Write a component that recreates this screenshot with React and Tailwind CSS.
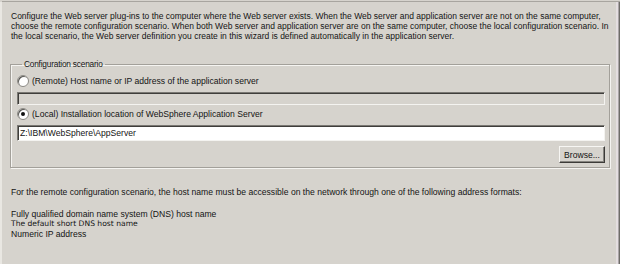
const sunken = "border border-t-[#7a7873] border-l-[#7a7873] border-b-[#f4f3f0] border-r-[#f4f3f0] shadow-[inset_1px_1px_0_#3f3e3b]";

function Radio({ checked }) {
  return (
    <span className="w-[12px] h-[12px] rounded-full bg-white border border-[#8c8a85] shadow-[inset_1px_1px_0_#5a5955] flex items-center justify-center shrink-0">
      {checked && <span className="w-[4px] h-[4px] rounded-full bg-[#111]" />}
    </span>
  );
}

export default function App() {
  return (
    <div
      className="w-[620px] h-[264px] bg-[#d6d3cd] flex overflow-hidden text-[#141414]"
      style={{ fontFamily: '"Liberation Sans", Arial, sans-serif' }}
    >
      <div className="w-[2px] h-full bg-[#e9e7e2] mt-[2px] shrink-0" />
      <div className="flex-1 min-w-0 flex flex-col border-t border-[#a8a59f] mt-px">
        <div className="pl-[9px] pt-[9px] text-[8.5px] leading-[10px] whitespace-nowrap">
          <div>Configure the Web server plug-ins to the computer where the Web server exists. When the Web server and application server are not on the same computer,</div>
          <div>choose the remote configuration scenario. When both Web server and application server are on the same computer, choose the local configuration scenario. In</div>
          <div>the local scenario, the Web server definition you create in this wizard is defined automatically in the application server.</div>
        </div>

        <fieldset className="ml-[8px] mr-[4px] mt-[18px] pb-[4px] border border-[#a3a09a] shadow-[inset_1px_1px_0_#f5f4f1,1px_1px_0_#f5f4f1] pl-[6px] pr-[4px] flex flex-col">
          <legend className="ml-[5px] px-[2px] text-[8.3px] leading-[10px] tracking-[-0.2px]">Configuration scenario</legend>
          <div className="flex items-center gap-[3px] mt-[6px] text-[8.6px] leading-[12px]">
            <Radio />
            <span>(Remote) Host name or IP address of the application server</span>
          </div>
          <div className={`h-[13px] mt-[5px] bg-[#d6d3cd] ${sunken}`} />
          <div className="flex items-center gap-[3px] mt-[3px] text-[8.6px] leading-[12px]">
            <Radio checked />
            <span>(Local) Installation location of WebSphere Application Server</span>
          </div>
          <div className={`h-[16px] mt-[5px] bg-white ${sunken} pl-[2px] text-[8.6px] leading-[14px]`}>
            Z:\IBM\WebSphere\AppServer
          </div>
          <div className="flex justify-end mt-[5px]">
            <button className="w-[46px] h-[17px] bg-[#d6d3cd] border border-t-[#f7f6f3] border-l-[#f7f6f3] border-b-[#3c3b38] border-r-[#3c3b38] shadow-[inset_-1px_-1px_0_#86847f] text-[8.6px] leading-[14px]">
              Browse...
            </button>
          </div>
        </fieldset>

        <div className="pl-[9px] mt-[19px] text-[8.6px] leading-[10px] whitespace-nowrap">
          <div>For the remote configuration scenario, the host name must be accessible on the network through one of the following address formats:</div>
          <div className="mt-[12px]">Fully qualified domain name system (DNS) host name</div>
          <div className="text-[7.6px]" style={{ fontFamily: '"DejaVu Sans", Verdana, sans-serif' }}>The default short DNS host name</div>
          <div>Numeric IP address</div>
        </div>
      </div>
      <div className="w-[6px] h-full flex mt-px border-t border-[#a8a59f] shrink-0">
        <div className="w-[2px]" />
        <div className="w-[2px] bg-[#e4dee0]" />
        <div className="w-px bg-[#a9a4a6]" />
        <div className="w-px bg-[#6e6c68]" />
      </div>
    </div>
  );
}
